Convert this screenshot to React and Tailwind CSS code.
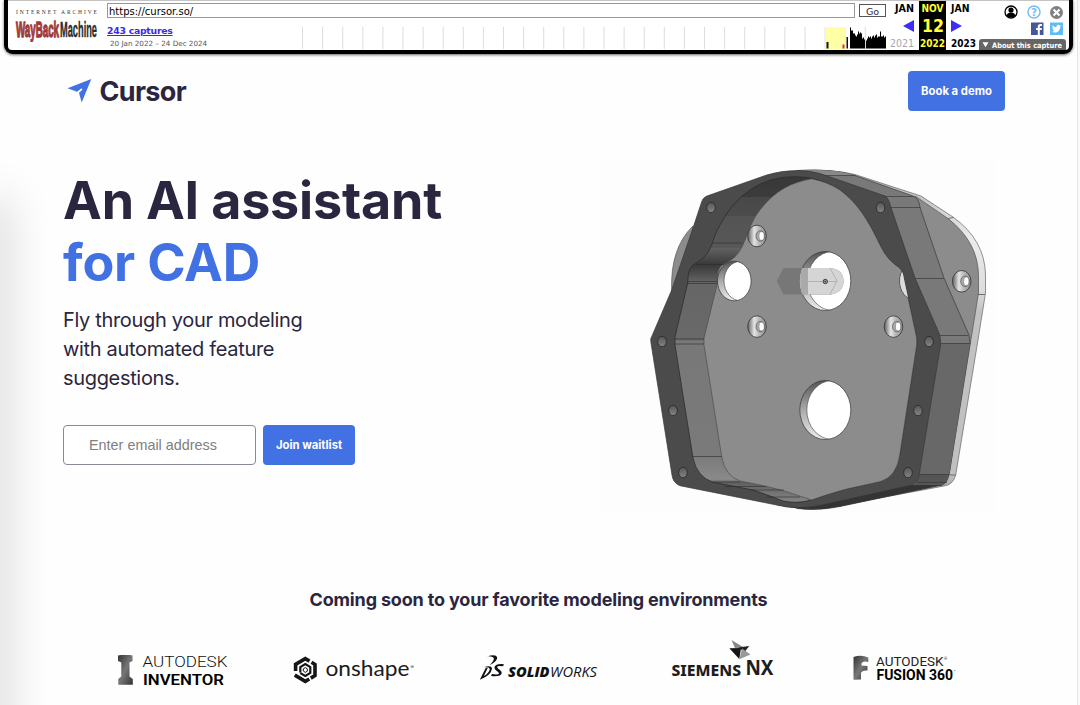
import React from "react";

const font = "font-['Inter',sans-serif]";

function Sparkline() {
  const ticks = [];
  for (let x = 0; x <= 580; x += 20.1) ticks.push(x);
  const a = [21, 18, 18, 15, 15, 13, 12, 14, 17, 15, 16, 15, 10, 11, 9, 0, 8, 10, 12, 11, 12, 10, 12, 13, 11, 13, 14, 11, 12, 12, 17, 12, 12, 13, 11, 12];
  return (
    <svg className="block h-[22px] w-[584px]" viewBox="302 27 584 22">
      {ticks.map((t) => (
        <rect key={t} x={302 + t} y="27" width="1" height="22" fill="#ddd" />
      ))}
      <rect x="825.5" y="27" width="20" height="22" fill="#ffffa5" />
      <rect x="826.5" y="42" width="2" height="6.500" fill="#111" />
      <rect x="842.5" y="44.500" width="2" height="4" fill="#e0206a" />
      <rect x="846.5" y="37" width="1.500" height="11.500" fill="#111" />
      {a.map((h, i) => (
        <rect key={i} x={850 + i} y={48.5 - h} width="1.050" height={h} fill="#000" />
      ))}
    </svg>
  );
}

function WaybackLogo() {
  return (
    <svg className="block h-[35px] w-[88px]" viewBox="15 7 88 35" fontFamily="'Liberation Serif', serif">
      <text x="16" y="14" fontSize="5.500" fill="#333" textLength="81">INTERNET ARCHIVE</text>
      <g transform="translate(15.500 36.500) scale(1 1.850)" fontFamily="'Liberation Sans', sans-serif" fontWeight="700" fontSize="12">
        <text x="0.500" y="0" fill="#a03a3a" stroke="#a03a3a" strokeWidth=".7" textLength="43" lengthAdjust="spacingAndGlyphs">WayBack</text>
        <text x="44.500" y="0" fill="#2b2b2b" stroke="#2b2b2b" strokeWidth=".2" textLength="37" lengthAdjust="spacingAndGlyphs">Machine</text>
      </g>
    </svg>
  );
}

function Toolbar() {
  return (
    <header className="ml-1 h-[54px] w-[1069px] rounded-b-[9px] bg-black px-1 pb-1 font-['DejaVu_Sans',sans-serif] shadow-[0_1px_3px_rgba(0,0,0,0.6)]">
      <div className="flex h-[50px] w-full rounded-b-[4px] border-t border-[#c4c4c4] bg-white">
        <div className="w-[99px] shrink-0 pt-[6px] pl-[7px]">
          <WaybackLogo />
        </div>
        <div className="w-[780px] shrink-0">
          <div className="mt-[2px] flex gap-1">
            <div className="h-[15px] w-[748px] border border-[#999] pl-px text-[10px] leading-[15px] text-black">https://cursor.so/</div>
            <div className="mt-px h-[13px] w-[27px] border border-[#555] text-center text-[9.500px] leading-[13px]">Go</div>
          </div>
          <div className="mt-[7px] flex">
            <div className="w-[195px] shrink-0">
              <div className="text-[9.300px] leading-[12px] font-bold tracking-[-0.25px] text-[#3b2be0] underline">243 captures</div>
              <div className="mt-[2px] pl-[3px] text-[7.200px] leading-[10px] text-[#555]">20 Jan 2022 – 24 Dec 2024</div>
            </div>
            <div className="pt-[2px]">
              <Sparkline />
            </div>
          </div>
        </div>
        <svg className="-ml-px block h-[49px] w-[182px] shrink-0" viewBox="886 1 182 49" fontFamily="'DejaVu Sans', sans-serif" fontWeight="700">
          <rect x="919" y="0" width="27" height="50" fill="#000" />
          <g fontSize="10.500">
            <text x="895" y="12.300" textLength="19" lengthAdjust="spacingAndGlyphs">JAN</text>
            <text x="921.5" y="12.300" fill="#ff3" textLength="22" lengthAdjust="spacingAndGlyphs">NOV</text>
            <text x="951" y="12.300" textLength="18.500" lengthAdjust="spacingAndGlyphs">JAN</text>
            <text x="890" y="46.500" fill="#a6a6b0" fontWeight="400" textLength="24" lengthAdjust="spacingAndGlyphs">2021</text>
            <text x="920" y="46.500" fill="#ff3" textLength="25" lengthAdjust="spacingAndGlyphs">2022</text>
            <text x="951" y="46.500" textLength="25" lengthAdjust="spacingAndGlyphs">2023</text>
          </g>
          <text x="922" y="32" fontSize="17.500" fill="#ff3" textLength="22" lengthAdjust="spacingAndGlyphs">12</text>
          <path d="M914 20v12l-11-6zM951 20v12l11-6z" fill="#3d2df5" />
          <circle cx="1011" cy="12" r="6" fill="#fff" stroke="#000" strokeWidth="1.300" />
          <circle cx="1011" cy="10" r="2.600" />
          <path d="M1006.500 15.500q1-3 4.500-3t4.500 3q-1.500 2-4.500 2t-4.500-2" />
          <circle cx="1034" cy="12" r="6" fill="#fff" stroke="#78bdf2" strokeWidth="1.500" />
          <text x="1034" y="16" fontSize="10.500" textAnchor="middle" fill="#78bdf2">?</text>
          <circle cx="1056.500" cy="12.500" r="6.500" fill="#808080" />
          <path d="m1053.500 9.500 6 6m0-6-6 6" stroke="#fff" strokeWidth="2" />
          <rect x="1031" y="22.500" width="12.500" height="12.500" fill="#45599a" />
          <path d="M1037.800 35v-5h-1.700v-2h1.700v-1.500q0-2.600 2.600-2.600h1.600v2h-1.200q-1 0-1 1v1.100h2.100l-.3 2h-1.800v5z" fill="#fff" />
          <rect x="1050" y="22.500" width="13" height="12.500" fill="#60bdf3" />
          <path transform="translate(1051.500 23.800) scale(.42)" d="M23 4.600c-.8.400-1.700.6-2.600.7.900-.6 1.600-1.400 2-2.500-.9.500-1.900.9-2.900 1.100a4.500 4.500 0 0 0-7.700 4.100C8 7.800 4.700 6 2.500 3.300c-1.200 2-.6 4.700 1.400 6-.7 0-1.400-.2-2-.5 0 2.200 1.500 4 3.600 4.500-.7.200-1.400.2-2 .1.500 1.800 2.200 3.100 4.200 3.100A9.200 9.200 0 0 1 1 18.400c8.500 5.400 19.700.1 19.700-11z" fill="#fff" />
          <path d="M979 50V42q0-3 3-3h81q3 0 3 3v8z" fill="#666" />
          <path d="M982.500 42.300h6l-3 5z" fill="#fff" />
          <text x="992" y="47.700" fontSize="7.400" fill="#fff" textLength="70" lengthAdjust="spacingAndGlyphs">About this capture</text>
        </svg>
      </div>
    </header>
  );
}

const bolts = [[711, 207.5], [880.5, 207.5], [662, 341.5], [929, 341.5], [673, 410.5], [918, 410.5], [683, 472.5], [908, 472.5]];

function Screw({ x, y }) {
  return (
    <g>
      <ellipse cx={x} cy={y} rx="9.300" ry="10.800" fill="url(#cone)" stroke="#333" strokeWidth=".8" />
      <ellipse cx={x + 3.2} cy={y} rx="4.200" ry="5.200" fill="#aaa" stroke="#444" strokeWidth=".6" />
      <ellipse cx={x + 4.6} cy={y} rx="2.600" ry="4.300" fill="#fff" stroke="#555" strokeWidth=".4" />
    </g>
  );
}

function Hole({ x, y, rx, ry, d, id }) {
  return (
    <g>
      <clipPath id={id}><ellipse cx={x} cy={y} rx={rx} ry={ry} /></clipPath>
      <ellipse cx={x} cy={y} rx={rx} ry={ry} fill="url(#bore)" />
      <ellipse cx={x + d} cy={y} rx={rx} ry={ry} fill="#fff" stroke="#555" strokeWidth=".7" clipPath={`url(#${id})`} />
      <ellipse cx={x} cy={y} rx={rx} ry={ry} fill="none" stroke="#333" strokeWidth=".7" />
    </g>
  );
}

const flange = "M651 343L650.700 339L671.700 290L693 228L701.700 201.700Q703 197 709 195.300L766.700 175Q781 170.500 797 170.500Q810 170.500 820 173.500L885 196Q889 198.500 890.700 206.700L915 278L939 333Q941 338 940.500 345L919.300 474Q918 483 911.700 485L820 505.500Q795 510 776.700 505L680 485.700Q673 483 672 475Z";
const inner = "C858 203 869 222 879 243C886 257 890 261 899 267.500Q903 271 904 279L916.700 338V345L900 453.300Q897 477 880 481.700L846.700 489Q825 495 811.700 500";
const cavity = `M796.700 176.700Q820 177 840 190${inner}Q797 504 783 501Q768 495 753 490L713 482.300Q697 477 693 458L675 345V336.700L687.700 283C688 266 693 265 700 260.500C713 252 711 240 720 225Q731 203 750 190Q770 176 796.700 176.700Z`;
const floor = `M811.700 178.800Q828 182 840 190${inner}L786.700 491.700Q770 487 760 485L740 481Q725 476 721.700 456.700L704 345V338L717.500 283Q716 270 722 265C735 259 740 253 745 240Q752 221 757 214C772 193 788 183 811.700 178.800Z`;

function CadPart() {
  return (
    <svg className="block h-[352px] w-[395px]" viewBox="600 160 395 352" strokeLinejoin="round">
      <defs>
        <linearGradient id="cone"><stop offset="0" stopColor="#606060" /><stop offset=".35" stopColor="#e4e4e4" /><stop offset=".6" stopColor="#bbb" /><stop offset="1" stopColor="#8a8a8a" /></linearGradient>
        <linearGradient id="bore" x2="0" y2="1"><stop offset="0" stopColor="#555" /><stop offset=".5" stopColor="#aaa" /><stop offset="1" stopColor="#eee" /></linearGradient>
        <linearGradient id="bolt" x2="0" y2="1"><stop offset="0" stopColor="#565656" /><stop offset="1" stopColor="#858585" /></linearGradient>
        <linearGradient id="rim" x2="0" y2="1"><stop offset="0" stopColor="#aaa" /><stop offset=".2" stopColor="#ececec" /><stop offset=".35" stopColor="#ddd" /><stop offset=".42" stopColor="#c2c2c2" /><stop offset=".9" stopColor="#c0c0c0" /><stop offset="1" stopColor="#858585" /></linearGradient>
        <linearGradient id="wall" gradientUnits="userSpaceOnUse" x1="0" y1="177" x2="0" y2="502">
          <stop offset="0" stopColor="#383838" /><stop offset=".061" stopColor="#3c3c3c" />
          <stop offset=".061" stopColor="#484848" /><stop offset=".12" stopColor="#4c4c4c" />
          <stop offset=".12" stopColor="#545454" /><stop offset=".22" stopColor="#585858" />
          <stop offset=".22" stopColor="#616161" /><stop offset=".27" stopColor="#393939" />
          <stop offset=".3" stopColor="#505050" /><stop offset=".325" stopColor="#666" />
          <stop offset=".5" stopColor="#696969" /><stop offset=".505" stopColor="#787878" />
          <stop offset=".86" stopColor="#7a7a7a" /><stop offset=".93" stopColor="#8a8a8a" />
          <stop offset=".94" stopColor="#606060" /><stop offset="1" stopColor="#858585" />
        </linearGradient>
        <clipPath id="big"><ellipse cx="825.300" cy="281" rx="25.500" ry="29.500" /></clipPath>
        <clipPath id="floorclip"><path d={floor} /></clipPath>
      </defs>
      <rect x="600" y="160" width="395" height="352" fill="#fdfdfd" />
      <path d="M693 226Q670 248 671.700 291L690 285Z" fill="#8c8c8c" stroke="#555" strokeWidth=".7" />
      <path d="M797 170.500Q830 168.500 855 174.500L921 196L953 217Q985 240 985.500 275V293L978 340L955.700 475Q953 485 944 486L820 509L900 300Z" fill="url(#rim)" stroke="#666" strokeWidth=".7" />
      <path d="M915 196L948 218.500Q978 242 978.500 275V293L949 475L900 400Z" fill="#8c8c8c" stroke="#555" strokeWidth=".7" />
      <path d="M948 218.500L953.500 217.500M978 294.500H985M949.500 475H955.500" stroke="#555" strokeWidth=".8" />
      <path d="M797 170.500Q835 168.500 855 175.500L913 196Q919 198 920 207.500L944 278L969 335L970 343L949 475Q947 484 941.700 485L840 506.500Q818 511 797 508.500Z" fill="#797979" stroke="#3a3a3a" strokeWidth=".7" />
      <path d="M797 170.500Q835 168.500 855 175.500H820Z" fill="#888" />
      <path d="M940.500 343H970L949 475H919Z" fill="#686868" />
      <path d="M919 474H949Q947 484 941.700 485L911 487Q918 484 919 474Z" fill="#555" />
      <path d="M911 485H942L840 506.500Q818 511 797 508.500L776 505L820 503Z" fill="#343434" />
      <path d="M822 175.500H855M885 196.500H914M891 207.500H920.500M915 278.500H944M940 335.500H968M940.500 343.500H970M919 474.500H949M917 482.500H947M911 485.500H942" fill="none" stroke="#3a3a3a" strokeWidth=".7" />
      <path d={flange} fill="#4b4b4b" stroke="#363636" strokeWidth=".7" />
      <path d={cavity} fill="url(#wall)" stroke="#2c2c2c" strokeWidth=".8" />
      <path d={floor} fill="#8c8c8c" stroke="#444" strokeWidth=".6" />
      <path d="M712 243H742M697 264.500H724M688 281.500H717M687.500 283.500H717M675 339H704M675 344H704M692.500 456.500H721.700M713 482H740M725 486.500H766M750 490H784M767 497H800" stroke="#2c2c2c" strokeWidth=".6" />
      <Hole id="h1" x={734.300} y={281} rx={16.800} ry={19.800} d={6.500} />
      <Hole id="h2" x={825.300} y={281} rx={25.500} ry={29.500} d={7.500} />
      <Hole id="h3" x={825.300} y={410} rx={25.500} ry={29.500} d={7} />
      <g clipPath="url(#floorclip)"><ellipse cx="915" cy="281" rx="15.500" ry="19" fill="#ddd" stroke="#444" strokeWidth=".8" /></g>
      <path d="M776.700 281L783.500 268H831Q843.500 270 843.500 281T831 294.500H783.500Z" fill="#777" />
      <path d="M776.700 281L783.500 268H831Q843.500 270 843.500 281T831 294.500H783.500Z" fill="#d5d5d5" clipPath="url(#big)" />
      <path d="M800 268H808V294.500H800.500Z" fill="#aaa" clipPath="url(#big)" />
      <path d="M802 281.500H837M830 268L837 281L830 294.500" fill="none" stroke="#aaa" strokeWidth=".8" />
      <circle cx="825.300" cy="281.500" r="2.200" fill="#999" stroke="#333" strokeWidth=".9" />
      <circle cx="825.300" cy="281.500" r=".7" fill="#222" />
      <Screw x={757} y={236} /><Screw x={757} y={326.600} /><Screw x={893.500} y={326.600} /><Screw x={961.700} y={281.300} />
      {bolts.map(([x, y]) => (
        <ellipse key={`${x}-${y}`} cx={x} cy={y} rx="4.300" ry="5.200" fill="url(#bolt)" stroke="#242424" strokeWidth=".8" />
      ))}
    </svg>
  );
}

function Logos() {
  return (
    <div className="mt-[26px] flex">
      <svg className="block h-[50px] w-[170px]" viewBox="90 638 170 50">
        <defs><linearGradient id="ig" x2="1" y2="1"><stop offset="0" stopColor="#333" /><stop offset=".5" stopColor="#777" /><stop offset="1" stopColor="#333" /></linearGradient></defs>
        <path d="M118 655.500L121 655H130L132.500 655.500V661L129.500 662.500V676.500L132.800 679V684.700H118.300V679L121.300 676.500V662.500L118 661Z" fill="url(#ig)" />
        <g fontFamily="Roboto, sans-serif">
          <text x="142.500" y="667.300" fontSize="15.500" fontWeight="300" fill="#111" textLength="85" lengthAdjust="spacingAndGlyphs">AUTODESK</text>
          <text x="143" y="684.500" fontSize="15.500" fontWeight="600" fill="#000" textLength="81" lengthAdjust="spacingAndGlyphs">INVENTOR</text>
        </g>
      </svg>
      <svg className="block h-[50px] w-[180px]" viewBox="260 638 180 50">
        <g fill="none" stroke="#151515" strokeWidth="3.600">
          <path d="M295.600 671V664.400L305.300 658.700L309.500 661.100" />
          <path d="M311.500 662.300L315 664.400V675.600L310.800 678.100" />
          <path d="M294.800 675.100L305.300 681.300L309.300 679" />
          <path d="M300.300 672.500V667L305.300 664L310.300 667V673L305.300 676L300.300 673.100" strokeWidth="2.200" />
          <path d="M303.300 671V668.800L305.300 667.600L307.300 668.800V671.200L305.300 672.400Z" strokeWidth="1" />
        </g>
        <text x="325.500" y="675.800" fontFamily="Lato, sans-serif" fontSize="22" fill="#1b1b1b" textLength="84" lengthAdjust="spacingAndGlyphs">onshape</text>
        <text x="410.500" y="668.500" fontFamily="Inter, sans-serif" fontSize="5" fill="#333">®</text>
      </svg>
      <svg className="block h-[50px] w-[190px]" viewBox="440 638 190 50">
        <g fill="#111">
          <path d="M487 656.400Q496 653.700 497.200 657.300Q497.600 661.500 489.500 665.300Q494.500 660.500 493.800 658Q492.500 656 487 656.400Z" />
          <path d="M483.500 667.200Q491.500 664.700 492 668.500Q491.500 675 479.800 679.800L485.800 667.800H487.800L483.800 676.300Q489.500 672.500 489.700 669.300Q489.300 666.700 483.500 667.200Z" />
          <path d="M504 664.200L503 666.200Q497.500 665.300 497 667Q497.500 668.500 500 670Q502.500 672 501.500 674Q499.500 677 491 676L492 674Q498.500 675 499 673.500Q499 672.300 496.500 670.700Q494 669 494.500 667Q496 663.200 504 664.200Z" />
        </g>
        <g fontFamily="'Open Sans', sans-serif" fontSize="13.800" fontStyle="italic" fill="#111">
          <text x="508" y="676.700" fontWeight="800" textLength="41.500" lengthAdjust="spacingAndGlyphs">SOLID</text>
          <text x="550" y="676.700" fontWeight="400" textLength="47" lengthAdjust="spacingAndGlyphs">WORKS</text>
        </g>
      </svg>
      <svg className="block h-[50px] w-[200px]" viewBox="630 638 200 50">
        <path d="M731.500 640L743 647L735 648.300Z" fill="#888" />
        <path d="M738 647.500L749.300 646L744.500 652Z" fill="#222" />
        <path d="M729.300 648.300L741 648L739.300 659Z" fill="#151515" />
        <path d="M739.300 659.300L742 648.500L750.500 654.500Z" fill="#999" />
        <g fontFamily="'Noto Sans', sans-serif" fontWeight="800" fill="#1d1d1d">
          <text x="671.500" y="675.500" fontSize="15" textLength="69.500" lengthAdjust="spacingAndGlyphs">SIEMENS</text>
          <text x="745.500" y="674.800" fontSize="20.500" fontWeight="700" textLength="28" lengthAdjust="spacingAndGlyphs">NX</text>
        </g>
      </svg>
      <svg className="block h-[50px] w-[170px]" viewBox="830 638 170 50">
        <path d="M853.500 657Q861 654.500 868.300 657.500V662Q863 660.500 861.500 663.500V665.500L867.500 666V670.500Q862 670 861 673V679.500L853.500 679.800Z" fill="url(#ig)" />
        <g fontFamily="Roboto, sans-serif">
          <text x="876" y="665.500" fontSize="13.500" fontWeight="400" fill="#222" textLength="67.500" lengthAdjust="spacingAndGlyphs">AUTODESK</text>
          <text x="944" y="660" fontSize="4" fill="#333">®</text>
          <text x="876.500" y="679.500" fontSize="13.800" fontWeight="700" fill="#000" textLength="76.500" lengthAdjust="spacingAndGlyphs">FUSION 360</text>
          <text x="953.500" y="673" fontSize="3.500" fill="#333">™</text>
        </g>
      </svg>
    </div>
  );
}

export default function App() {
  return (
    <div className={`relative flex h-[705px] w-[1080px] overflow-hidden bg-[#fafafa] text-[#2b2640] ${font}`}>
      <div className="h-full w-[1078px] shrink-0 border-r border-[#e4e4e4] bg-[#fefefe]">
        <Toolbar />
        <nav className="mt-[17px] flex h-[40px] items-start justify-between pr-[72px] pl-[67px]">
          <div className="flex items-start">
            <svg className="mt-[7px] block h-[25px] w-[25px]" viewBox="67 78 25 25">
              <path d="M91.300 79L67.500 88.300L77 91.700L80 89.500Q82 87.500 82.300 89.500Q81.500 91 79 92.800L81.700 102.500Z" fill="#4171e3" />
            </svg>
            <div className="mt-px ml-[7.500px] text-[27px] leading-[40px] font-bold tracking-[-0.65px]">Cursor</div>
          </div>
          <div className="h-[40px] w-[97px] rounded-[4px] bg-[#4171e3] text-center text-[11.300px] leading-[41px] font-bold text-white">Book a demo</div>
        </nav>
        <main className="flex h-[401px] pt-[49px] pl-[63px]">
          <section className="w-[537px] shrink-0">
            <h1 className="mt-[10px] text-[52px] leading-[62px] font-bold tracking-[-0.18px] whitespace-nowrap">
              An AI assistant
              <br />
              <span className="text-[#4171e3]">for CAD</span>
            </h1>
            <p className="mt-[12px] w-[260px] text-[20px] leading-[29px] tracking-[-0.33px]">Fly through your modeling with automated feature suggestions.</p>
            <div className="mt-[32px] flex gap-[7px]">
              <input placeholder="Enter email address" className="h-[40px] w-[193px] rounded-[4px] border border-[#8b8898] bg-white pl-[25px] font-['Liberation_Sans',sans-serif] text-[14.400px] placeholder:text-[#808080]" />
              <button className="h-[40px] w-[92px] rounded-[4px] bg-[#4171e3] pt-px text-[11.300px] font-bold whitespace-nowrap text-white">Join waitlist</button>
            </div>
          </section>
          <CadPart />
        </main>
        <section className="pt-[76px]">
          <h2 className="text-center text-[18px] leading-[24px] font-bold tracking-[-0.16px] whitespace-nowrap">Coming soon to your favorite modeling environments</h2>
          <div className="pl-[90px]"><Logos /></div>
        </section>
      </div>
      <div className="pointer-events-none absolute top-[200px] -left-[10px] h-[600px] w-[10px] shadow-[0_0_44px_rgba(0,0,0,0.45)]" />
    </div>
  );
}
